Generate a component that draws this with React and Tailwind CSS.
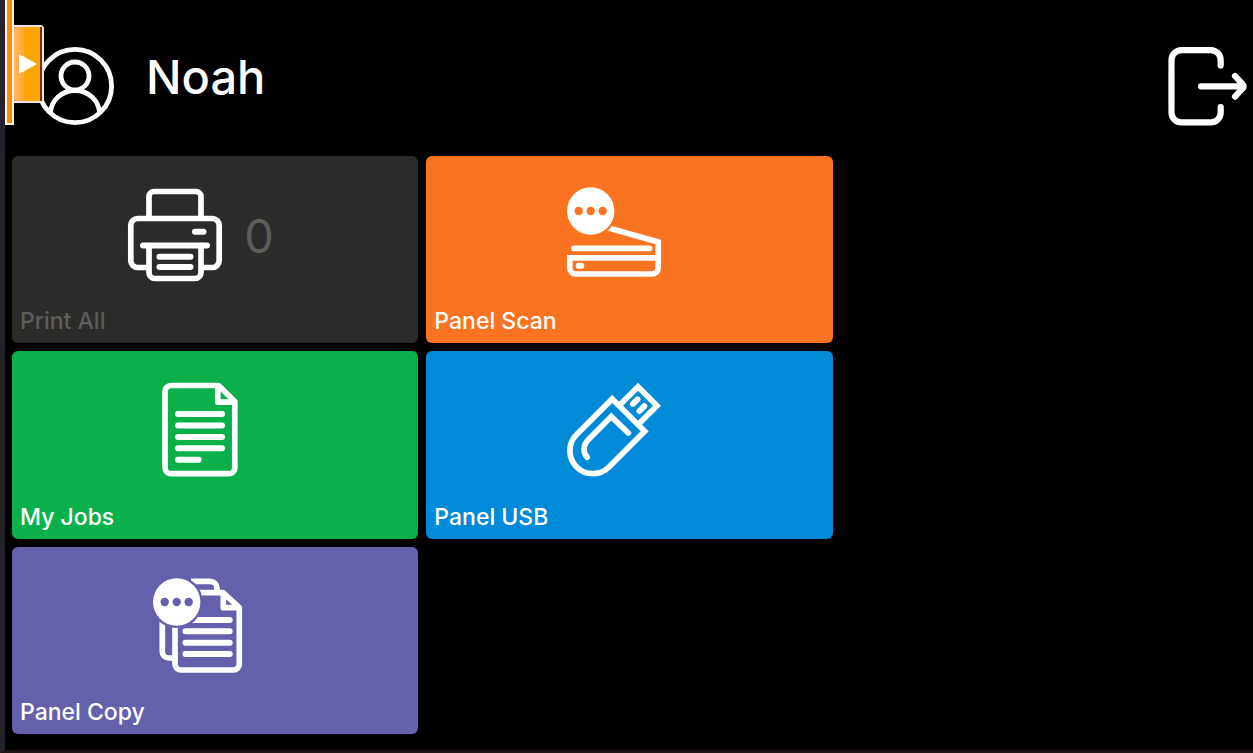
// src/App.jsx
import clsx from 'clsx';

function UserIcon() {
  return (
    <svg className="h-[78px] w-[78px]" viewBox="0 0 78 78" fill="none" stroke="currentColor" strokeWidth="4.8" aria-hidden="true">
      <circle cx="39" cy="39" r="36.6" />
      <circle cx="39" cy="29" r="14" />
      <path d="M14.5 65.5C15.5 53 26 43.5 39 43.5S62.5 53 63.5 65.5" />
    </svg>
  );
}

function LogoutIcon() {
  return (
    <svg className="h-[79px] w-[79px] overflow-visible" viewBox="0 1 79 79" fill="none" stroke="currentColor" strokeWidth="6.2" strokeLinecap="round" strokeLinejoin="round" aria-hidden="true">
      <path d="M52.7 19.5V14.1a10 10 0 0 0-10-10H13.5a10 10 0 0 0-10 10V66.4a10 10 0 0 0 10 10H42.7a10 10 0 0 0 10-10V61" />
      <path d="M33 40.3H75M67 30L74.8 38.4a2.6 2.6 0 0 1 0 3.8L67 50.6" />
    </svg>
  );
}

// Base for the tile drawings
function TileSvg({ children }) {
  return (
    <svg className="h-[94px] w-[94px] shrink-0 overflow-visible text-white" viewBox="0 0 94 94" fill="none" stroke="currentColor" strokeWidth="5.7" strokeLinecap="round" aria-hidden="true">
      {children}
    </svg>
  );
}

// White bubble with three dots, ringed in the tile colour
function DotsBadge({ color }) {
  return (
    <g stroke="none">
      <circle cx="23.7" cy="24" r="26" fill={color} />
      <circle cx="23.7" cy="24" r="23.7" fill="white" />
      <circle cx="11.7" cy="24" r="4.2" fill={color} />
      <circle cx="23.7" cy="24" r="4.2" fill={color} />
      <circle cx="35.7" cy="24" r="4.2" fill={color} />
    </g>
  );
}

function PrinterIcon() {
  return (
    <TileSvg>
      <path d="M21 31V9.5a5 5 0 0 1 5-5H68a5 5 0 0 1 5 5V31" />
      <path d="M21 80.5H9.8a7 7 0 0 1-7-7V38.5a7 7 0 0 1 7-7H84.2a7 7 0 0 1 7 7V73.5a7 7 0 0 1-7 7H73" strokeLinecap="butt" />
      <path d="M21 58.5V85.5a6 6 0 0 0 6 6H67a6 6 0 0 0 6-6V58.5" />
      <path d="M15 58.5H79M31.5 69.7H62.5M31.5 80H62.5M67 44.7H75.5" strokeWidth="6" />
    </TileSvg>
  );
}

function ScanIcon() {
  return (
    <TileSvg>
      <path d="M38 40L91.2 55V81a6 6 0 0 1-6 6H8.8a6 6 0 0 1-6-6V70.9H91" strokeLinecap="butt" />
      <path d="M7 61.3H82.5" />
      <path d="M11.7 78.8H14.3" strokeWidth="6" />
      <DotsBadge color="#fa7321" />
    </TileSvg>
  );
}

function JobsIcon() {
  return (
    <TileSvg>
      <path d="M65.5 3.5H18a6 6 0 0 0-6 6V85.7a6 6 0 0 0 6 6H75.8a6 6 0 0 0 6-6V19.5ZM64.8 4.5V20.2H81" strokeLinejoin="round" />
      <path d="M25 32H69M25 43.4H69M25 54.9H69M25 66.3H69M25 77.7H45.7" strokeWidth="6" />
    </TileSvg>
  );
}

function UsbIcon() {
  return (
    <TileSvg>
      <path d="M45.3 16.9L77.7 49.3L42 85A22.9 22.9 0 0 1 9.6 52.6Z" />
      <path d="M52.5 23.2L71 4.7L90 23.7L71.2 42.5" strokeLinecap="butt" />
      <path d="M61.3 51L44.3 34.6L21.5 57.5C15.8 63.2 15.8 70 20.2 75.3" />
      <path d="M66 21.9L70.5 17.4M72.5 29L77.3 24.2" strokeWidth="6" />
    </TileSvg>
  );
}

function CopyIcon() {
  return (
    <TileSvg>
      <path d="M38 3.3H57a7 7 0 0 1 7 7V16M9.3 44V73.5a6.5 6.5 0 0 0 6.5 6.5H22" strokeLinecap="butt" />
      <path d="M70 14.7H28a6 6 0 0 0-6 6V86a6 6 0 0 0 6 6H80.3a6 6 0 0 0 6-6V29.5ZM70.3 16V29.7H85.5" strokeLinejoin="round" />
      <path d="M32.5 42H76.7M32.5 53.3H76.7M32.5 64.7H76.7M32.5 76H76.7" strokeWidth="6" />
      <DotsBadge color="#6560ac" />
    </TileSvg>
  );
}

const tiles = [
  { label: 'Print All', icon: PrinterIcon, bg: 'bg-[#2b2c2a]', count: 0, disabled: true },
  { label: 'Panel Scan', icon: ScanIcon, bg: 'bg-[#fa7321]' },
  { label: 'My Jobs', icon: JobsIcon, bg: 'bg-[#0ab14b]' },
  { label: 'Panel USB', icon: UsbIcon, bg: 'bg-[#018ad7]' },
  { label: 'Panel Copy', icon: CopyIcon, bg: 'bg-[#6560ac]' },
];

function Tile({ label, icon: Icon, bg, count, disabled }) {
  return (
    <button
      type="button"
      disabled={disabled}
      className={clsx(
        'flex flex-col justify-between rounded-md px-2 pt-[31px] pb-[6px] text-left',
        bg,
        disabled ? 'text-[#5c5e5c]' : 'text-white'
      )}
    >
      <span className="flex w-full items-center justify-center pr-[30px]">
        <Icon />
        {count !== undefined && (
          <span className="ml-[22px] w-7 pt-1 text-[47px] leading-[60px]">{count}</span>
        )}
      </span>
      <span className="text-[23px] leading-8 font-medium">{label}</span>
    </button>
  );
}

// Pull-out handle that lies over the left edge of the screen
function DrawerHandle() {
  return (
    <div className="absolute top-0 left-0 flex">
      <div className="h-[125px] w-[9px] border-2 border-t-0 border-[#fff3e4] bg-[#ff8c05]" />
      <button
        type="button"
        aria-label="Open drawer"
        className="mt-[25px] flex h-[78px] w-[30px] items-center rounded-r border-y-2 border-r-2 border-[#f3e6dc] bg-linear-to-r from-[#ffb566] to-[#ffa502] to-40%"
      >
        <svg className="ml-[5px] h-5 w-[18px]" viewBox="0 0 18 20" fill="white" aria-hidden="true">
          <path d="M0 0L18 10L0 20Z" />
        </svg>
        <span className="ml-auto h-full w-[2px] bg-[#6b3200]" />
      </button>
    </div>
  );
}

export default function App() {
  return (
    <div className="flex min-h-screen flex-col border-b-3 border-l-5 border-b-[#1f1414] border-l-[#242329] bg-black font-[Inter,'Liberation_Sans',sans-serif] text-white">
      <div className="relative flex flex-1 flex-col">
        {/* Header */}
        <header className="flex items-start justify-between pt-[47px] pr-[6px] pb-[30px] pl-[31px]">
          <div className="flex items-start gap-8">
            <UserIcon />
            <h1 className="text-[47px] leading-[60px] font-medium">Noah</h1>
          </div>
          <button type="button" aria-label="Log out">
            <LogoutIcon />
          </button>
        </header>

        {/* Tiles */}
        <main className="grid flex-1 grid-cols-3 grid-rows-3 gap-2 pr-[6px] pb-4 pl-[7px]">
          {tiles.slice(0, 2).map((tile) => (
            <Tile key={tile.label} {...tile} />
          ))}
          <div />
          {tiles.slice(2, 4).map((tile) => (
            <Tile key={tile.label} {...tile} />
          ))}
          <div />
          <Tile {...tiles[4]} />
        </main>

        <DrawerHandle />
      </div>
    </div>
  );
}
